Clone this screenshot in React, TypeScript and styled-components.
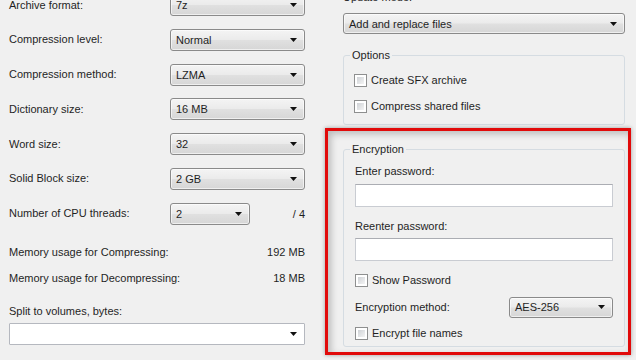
import { Fragment } from "react";
import styled, { createGlobalStyle } from "styled-components";

const GlobalStyle = createGlobalStyle`
  html, body {
    margin: 0;
    padding: 0;
    background: #f0f0f0;
    overflow: hidden;
  }
  body {
    font-family: "Liberation Sans", Arial, sans-serif;
    font-size: 11px;
    color: #1f1f1f;
  }
`;

const Page = styled.div`
  width: 636px;
  height: 360px;
  display: flex;
  align-items: flex-start;
  padding-left: 9px;
  box-sizing: border-box;
  overflow: hidden;
`;

const LeftColumn = styled.div`
  width: 296px;
  margin-top: -6px;
  display: flex;
  flex-direction: column;
`;

const SettingsGrid = styled.div`
  display: grid;
  grid-template-columns: 161px 135px;
  grid-auto-rows: 22px;
  row-gap: 12.8px;
  align-items: center;
`;

const Label = styled.div<{ $mt?: number }>`
  line-height: 15px;
  white-space: nowrap;
  margin-top: ${(p) => p.$mt ?? 0}px;
`;

const ThreadsCell = styled.div`
  display: flex;
  align-items: center;
  justify-content: space-between;
`;

const Combo = styled.div<{ $width?: number; $height?: number; $editable?: boolean; $mt?: number }>`
  box-sizing: border-box;
  width: ${(p) => (p.$width ? `${p.$width}px` : "100%")};
  height: ${(p) => p.$height ?? 22}px;
  margin-top: ${(p) => p.$mt ?? 0}px;
  display: flex;
  align-items: center;
  justify-content: space-between;
  padding: 0 7px 0 5px;
  border: 1px solid ${(p) => (p.$editable ? "#b5b8bf" : "#8a8a8a")};
  border-radius: ${(p) => (p.$editable ? 1 : 3)}px;
  background: ${(p) =>
    p.$editable
      ? "#ffffff"
      : "linear-gradient(#f4f4f4 0%, #ebebeb 48%, #e0e0e0 52%, #d6d6d6 100%)"};
  box-shadow: ${(p) => (p.$editable ? "none" : "inset 0 0 0 1px rgba(255,255,255,0.6)")};
  white-space: nowrap;
`;

const Arrow = () => (
  <svg width="7" height="4" viewBox="0 0 7 4">
    <polygon points="0,0 7,0 3.5,4" fill="#111" />
  </svg>
);

const StatsList = styled.div`
  margin-top: 20.5px;
  display: flex;
  flex-direction: column;
  gap: 11px;
`;

const StatRow = styled.div`
  display: flex;
  justify-content: space-between;
  line-height: 15px;
`;

const RightColumn = styled.div`
  width: 282px;
  margin-left: 38px;
  margin-top: -10px;
  display: flex;
  flex-direction: column;
`;

const Group = styled.fieldset<{ $mt?: number }>`
  margin: ${(p) => p.$mt ?? 0}px 0 0 0;
  padding: 0;
  border: 1px solid #d5dce2;
  border-radius: 3px;
  min-width: 0;
`;

const Legend = styled.legend`
  margin-left: 6px;
  padding: 0 2px;
  line-height: 15px;
`;

const GroupBody = styled.div<{ $pt: number; $pb: number; $px: number }>`
  display: flex;
  flex-direction: column;
  padding: ${(p) => `${p.$pt}px ${p.$px}px ${p.$pb}px`};
`;

const CheckRow = styled.label<{ $mt?: number }>`
  display: flex;
  align-items: center;
  gap: 4px;
  line-height: 15px;
  margin-top: ${(p) => p.$mt ?? 0}px;
`;

const CheckBox = styled.span`
  position: relative;
  box-sizing: border-box;
  width: 13px;
  height: 13px;
  border: 1px solid #8e8f8f;
  background: #fff;
  &::after {
    content: "";
    position: absolute;
    inset: 2px;
    background: linear-gradient(135deg, #cfd2d6, #f4f4f4);
  }
`;

const Highlight = styled.div`
  margin: 3px -6px 0 -18px;
  padding: 11.5px 3px 5px 15px;
  border: 3px solid #e10a0a;
  box-shadow: inset 3px 3px 7px rgba(0, 0, 0, 0.22), 0 0 4px rgba(0, 0, 0, 0.35);
`;

const TextBox = styled.div<{ $mt: number }>`
  box-sizing: border-box;
  height: 23px;
  margin-top: ${(p) => p.$mt}px;
  background: #fff;
  border: 1px solid #c9ccd2;
  border-top-color: #abadb3;
`;

const MethodRow = styled.div`
  display: flex;
  align-items: center;
  justify-content: space-between;
  margin-top: 8.5px;
`;

const settings = [
  ["Archive format:", "7z"],
  ["Compression level:", "Normal"],
  ["Compression method:", "LZMA"],
  ["Dictionary size:", "16 MB"],
  ["Word size:", "32"],
  ["Solid Block size:", "2 GB"],
];

export default function App() {
  return (
    <>
      <GlobalStyle />
      <Page>
        <LeftColumn>
          <SettingsGrid>
            {settings.map(([label, value]) => (
              <Fragment key={label}>
                <Label>{label}</Label>
                <Combo>
                  <span>{value}</span>
                  <Arrow />
                </Combo>
              </Fragment>
            ))}
            <Label>Number of CPU threads:</Label>
            <ThreadsCell>
              <Combo $width={80}>
                <span>2</span>
                <Arrow />
              </Combo>
              <span>/ 4</span>
            </ThreadsCell>
          </SettingsGrid>
          <StatsList>
            <StatRow>
              <span>Memory usage for Compressing:</span>
              <span>192 MB</span>
            </StatRow>
            <StatRow>
              <span>Memory usage for Decompressing:</span>
              <span>18 MB</span>
            </StatRow>
          </StatsList>
          <Label $mt={18}>Split to volumes, bytes:</Label>
          <Combo $editable $mt={3.5}>
            <span />
            <Arrow />
          </Combo>
        </LeftColumn>

        <RightColumn>
          <Label>Update mode:</Label>
          <Combo $height={21} $mt={8}>
            <span>Add and replace files</span>
            <Arrow />
          </Combo>
          <Group $mt={13.5}>
            <Legend>Options</Legend>
            <GroupBody $pt={10} $pb={10} $px={10}>
              <CheckRow>
                <CheckBox />
                Create SFX archive
              </CheckRow>
              <CheckRow $mt={11}>
                <CheckBox />
                Compress shared files
              </CheckRow>
            </GroupBody>
          </Group>

          <Highlight>
            <Group>
              <Legend>Encryption</Legend>
              <GroupBody $pt={7} $pb={5} $px={11}>
                <Label>Enter password:</Label>
                <TextBox $mt={4.5} />
                <Label $mt={12.5}>Reenter password:</Label>
                <TextBox $mt={3.5} />
                <CheckRow $mt={12.5}>
                  <CheckBox />
                  Show Password
                </CheckRow>
                <MethodRow>
                  <Label>Encryption method:</Label>
                  <Combo $width={104} $height={21}>
                    <span>AES-256</span>
                    <Arrow />
                  </Combo>
                </MethodRow>
                <CheckRow $mt={8.5}>
                  <CheckBox />
                  Encrypt file names
                </CheckRow>
              </GroupBody>
            </Group>
          </Highlight>
        </RightColumn>
      </Page>
    </>
  );
}
